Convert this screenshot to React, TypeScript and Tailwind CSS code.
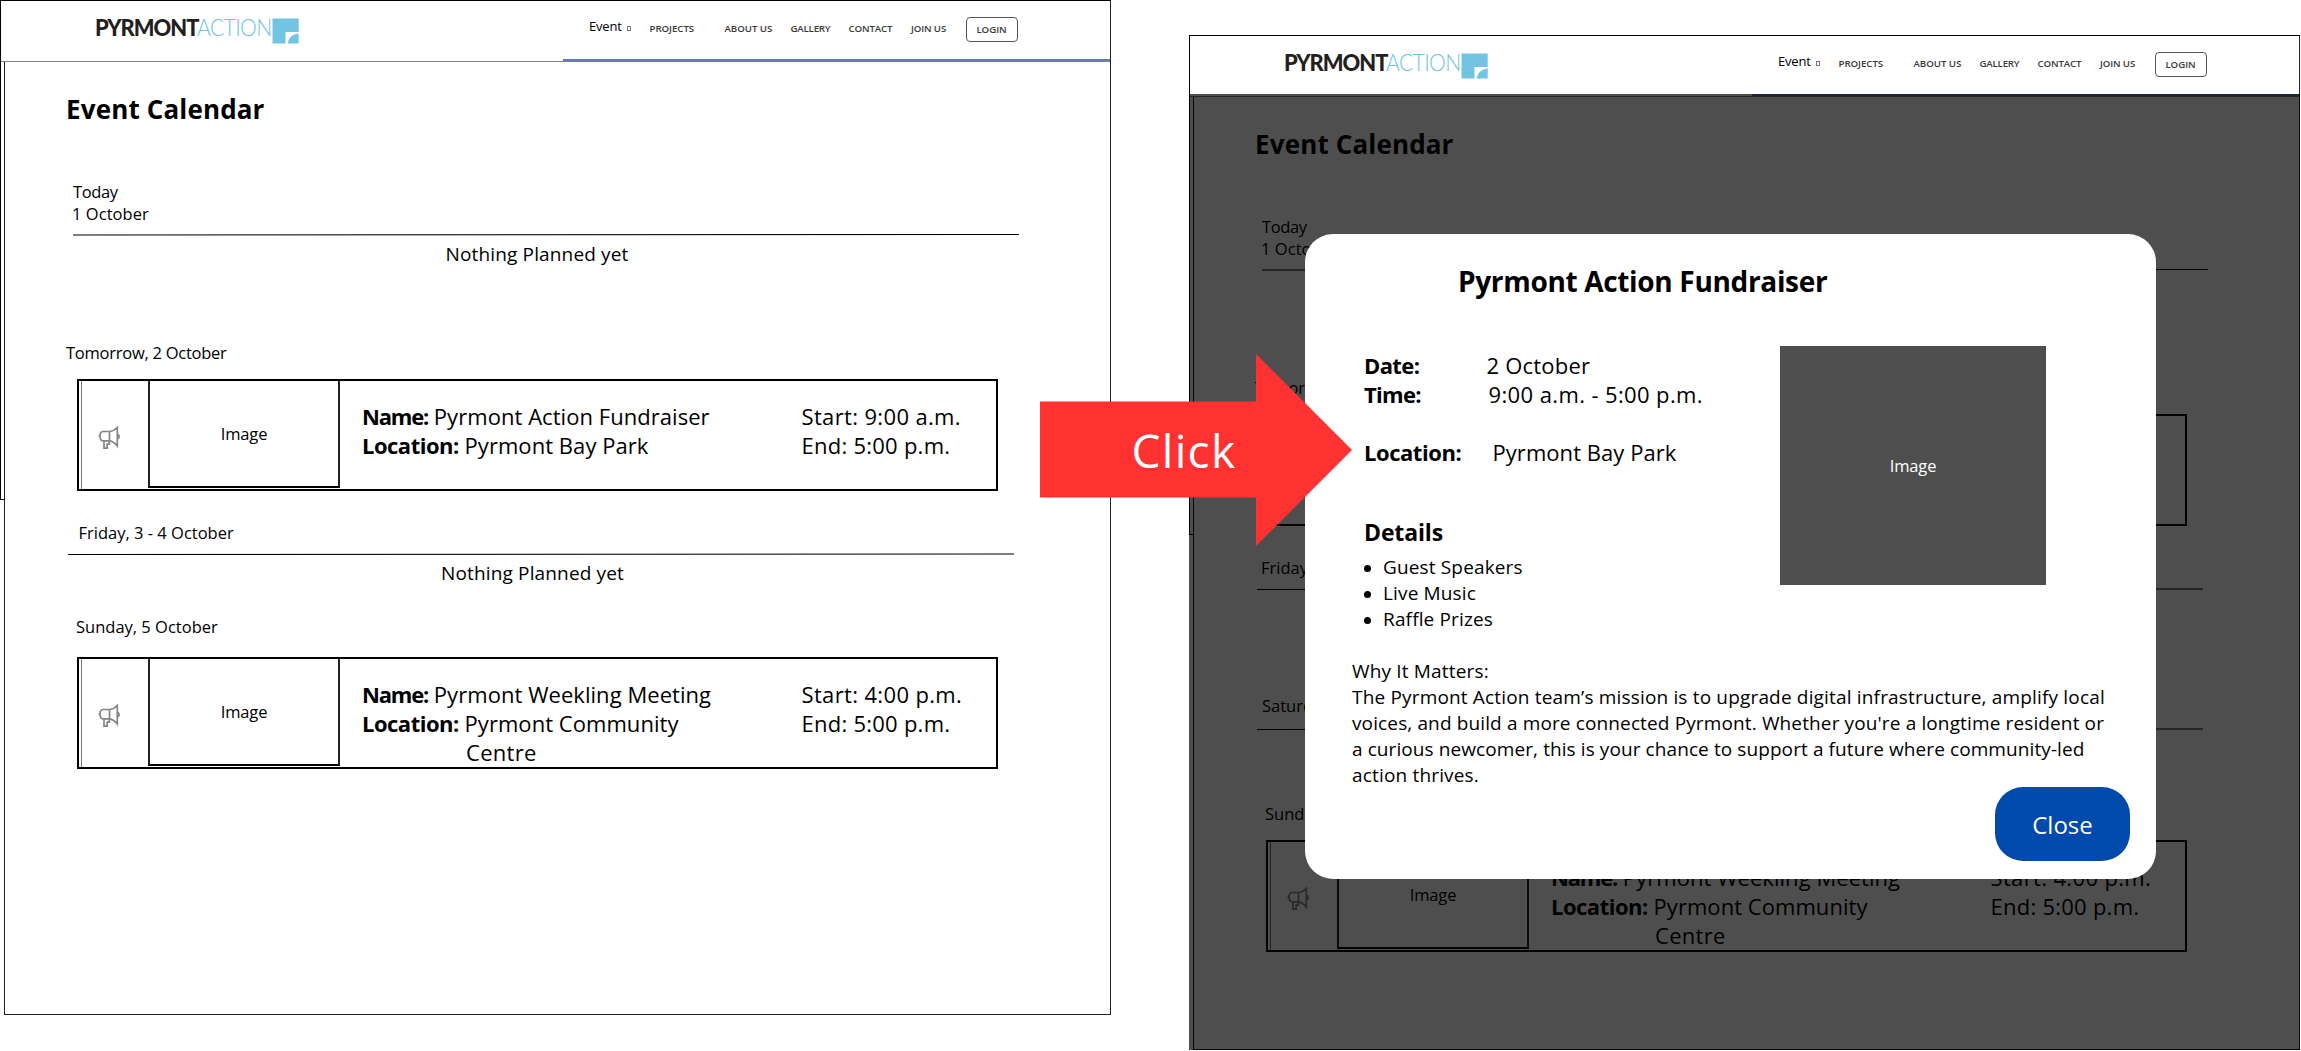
import type { ReactNode } from "react";

type EventInfo = { name: string; location: string; locationRest?: string; start: string; end: string };

const fundraiser: EventInfo = {
  name: "Pyrmont Action Fundraiser",
  location: "Pyrmont Bay Park",
  start: "9:00 a.m.",
  end: "5:00 p.m.",
};

const meeting: EventInfo = {
  name: "Pyrmont Weekling Meeting",
  location: "Pyrmont Community",
  locationRest: "Centre",
  start: "4:00 p.m.",
  end: "5:00 p.m.",
};

function Logo() {
  return (
    <div className="flex items-start">
      <div className="flex w-[177px] items-baseline font-['Lato'] text-[23.5px] leading-[28px]">
        <span className="w-[102px] origin-left scale-x-[0.93] font-black tracking-[-1.1px] text-[#231f20]">PYRMONT</span>
        <span className="origin-left scale-x-[0.9] tracking-[-0.7px] text-[#6ec3e2] font-light">ACTION</span>
      </div>
      <svg className="mt-[5px] h-[26px] w-[27px]" viewBox="0 0 27 26">
        <path d="M0.5 0.5H26.7V25.5H0.5Z" fill="#72c4e2" />
        <path d="M13.5 14H27V26H13.5Z" fill="#fff" />
        <path d="M26.700 15.500V25.400H15.600Q17 16.500 26.700 15.500Z" fill="#72c4e2" />
      </svg>
    </div>
  );
}

function Header() {
  return (
    <header className="relative h-[61px] border-b border-[#7f7f7f] bg-white">
      <div className="flex pl-[95px] pt-[12px]">
        <div className="w-[493px]">
          <Logo />
        </div>
        <nav className="flex pt-[7px] text-[9.7px] font-semibold leading-[18px] tracking-[-0.05px] text-[#3a3a3a]">
          <div className="-mt-[2px] ml-px flex h-[16px] w-[60.500px] items-center text-[13px] font-normal leading-[16px] tracking-[-0.2px] text-black">
            Event
            <span className="ml-[5px] mt-1 h-[5px] w-[4px] border border-[#777]" />
          </div>
          <span className="w-[75px]">PROJECTS</span>
          <span className="w-[66px]">ABOUT US</span>
          <span className="w-[58px] tracking-[-0.2px]">GALLERY</span>
          <span className="w-[62.500px] tracking-[-0.150px]">CONTACT</span>
          <span className="w-[54.500px] tracking-[-0.150px]">JOIN US</span>
          <button className="-mt-[3px] flex h-[25px] w-[52px] items-center justify-center rounded-[4px] border border-[#555]">
            LOGIN
          </button>
        </nav>
      </div>
      <div className="absolute bottom-0 right-0 h-[2px] w-[547px] bg-[#5b7db8]" />
    </header>
  );
}

function Megaphone() {
  return (
    <svg className="h-[23px] w-[23px]" viewBox="0 0 23 23" fill="none" stroke="#858585" strokeWidth="1.7">
      <path d="M11.500 5.500H5C2.600 5.500 2 7.600 2 10s.6 4.800 3 4.800h6.500V5.500" />
      <path d="M11.500 5.500C14.500 5.200 17 3.900 19.300 1.500V20C17 17 14.500 15.200 11.500 14.800" />
      <path d="M20 8.500Q22.300 10.300 20 12.600M0.500 10H2M6 15V22.200H9.200V18.200H11.300V15.200" />
    </svg>
  );
}

function DayLabel({ children, className }: { children: ReactNode; className: string }) {
  return <p className={`text-[16.500px] leading-[22px] ${className}`}>{children}</p>;
}

/* Two-pixel hairline whose weight shifts from one row to the other along its length. */
function Rule({ tilt, className }: { tilt: "up" | "down"; className: string }) {
  return (
    <div className={className}>
      <div
        className={
          tilt === "up"
            ? "h-px bg-linear-to-r from-[#7f7f7f] to-black"
            : "h-px bg-linear-to-r from-transparent to-[#7f7f7f]"
        }
      />
      <div
        className={
          tilt === "up"
            ? "h-px bg-linear-to-r from-[#7f7f7f] to-transparent"
            : "h-px bg-linear-to-r from-black to-[#7f7f7f]"
        }
      />
    </div>
  );
}

function NothingPlanned({ className }: { className: string }) {
  return <p className={`text-[19px] leading-[26px] tracking-[0.150px] ${className}`}>Nothing Planned yet</p>;
}

function EventCard({ event, className }: { event: EventInfo; className: string }) {
  return (
    <article className={`ml-[72px] flex h-[112px] w-[921px] border-2 border-black pl-[2px] ${className}`}>
      <div className="flex w-[67px] items-center border-l border-[#777] pl-[16px] pt-[5px]">
        <Megaphone />
      </div>
      <div className="flex h-[107px] w-[192px] items-center justify-center border-x-2 border-b-2 border-x-[#222] border-b-black text-[16.500px] leading-[22px] tracking-[-0.150px]">
        Image
      </div>
      <div className="w-[461.500px] pl-[22px] pt-[21px] text-[22px] leading-[29px] tracking-[0.050px]">
        <p>
          <b className="tracking-[-1.200px]">Name:</b> {event.name}
        </p>
        <p>
          <b className="tracking-[-0.500px]">Location:</b> {event.location}
        </p>
        {event.locationRest && <p className="pl-[104px] tracking-[0.300px]">{event.locationRest}</p>}
      </div>
      <div className="whitespace-nowrap pt-[21px] text-[22px] leading-[29px] tracking-[0.350px]">
        <p>Start: {event.start}</p>
        <p className="tracking-[0.250px]">End: {event.end}</p>
      </div>
    </article>
  );
}

function CalendarPage({ variant }: { variant: "plain" | "dimmed" }) {
  return (
    <section className="relative h-[1015px] w-[1111px] border-r border-t border-[#222] border-t-black bg-white text-black">
      <Header />
      <div className="ml-1 h-[953px] border-b border-l border-[#222]">
        <h1 className="pl-[61px] pt-[29px] text-[26px] font-bold leading-[36px] tracking-[0.150px]">Event Calendar</h1>
        <DayLabel className="mt-[54px] pl-[68px] tracking-[-0.400px]">Today</DayLabel>
        <DayLabel className="pl-[67px] tracking-[0.050px]">1 October</DayLabel>
        <Rule tilt="up" className="ml-[68px] mt-[9px] w-[946px]" />
        <NothingPlanned className="mt-[5px] pl-[440.500px]" />
        <DayLabel className="mt-[75px] pl-[61px] tracking-[-0.250px]">Tomorrow, 2 October</DayLabel>
        <EventCard event={fundraiser} className="mt-[15px]" />
        {variant === "plain" ? (
          <>
            <DayLabel className="mt-[31px] pl-[73.500px]">Friday, 3 - 4 October</DayLabel>
            <Rule tilt="down" className="ml-[63px] mt-[9px] w-[946px]" />
            <NothingPlanned className="mt-[5px] pl-[436px]" />
            <DayLabel className="mt-[30px] pl-[71px]">Sunday, 5 October</DayLabel>
            <EventCard event={meeting} className="mt-[19px]" />
          </>
        ) : (
          <>
            <DayLabel className="mt-[31px] pl-[67px]">Friday, 3 October</DayLabel>
            <Rule tilt="down" className="ml-[63px] mt-[9px] w-[946px]" />
            <DayLabel className="mt-[105px] pl-[68px]">Saturday, 4 October</DayLabel>
            <Rule tilt="down" className="ml-[63px] mt-[11px] w-[946px]" />
            <DayLabel className="mt-[73px] pl-[71px]">Sunday, 5 October</DayLabel>
            <EventCard event={meeting} className="mt-[15px]" />
          </>
        )}
      </div>
      <div className="absolute -top-px left-0 h-[500px] w-[5px] border-b border-l border-black" />
    </section>
  );
}

function Modal() {
  return (
    <div className="absolute left-[116px] top-[199px] h-[645px] w-[851px] rounded-[28px] bg-white text-black">
      <h2 className="pl-[153px] pt-[28px] text-[28px] font-bold leading-[38px] tracking-[-0.330px]">
        Pyrmont Action Fundraiser
      </h2>
      <div className="flex">
        <div className="w-[475px] pl-[59px] pt-[51px] text-[22px] leading-[29px]">
          <div className="flex">
            <b className="w-[122.500px] tracking-[-0.600px]">Date:</b>
            <span className="tracking-[0.200px]">2 October</span>
          </div>
          <div className="flex">
            <b className="w-[124.500px] tracking-[-0.700px]">Time:</b>
            <span className="tracking-[0.380px]">9:00 a.m. - 5:00 p.m.</span>
          </div>
          <div className="mt-[29px] flex">
            <b className="w-[128.500px] tracking-[-0.450px]">Location:</b>
            <span className="tracking-[0.050px]">Pyrmont Bay Park</span>
          </div>
          <h3 className="mt-[50px] text-[23px] font-bold leading-[31px] tracking-[-0.150px]">Details</h3>
          <ul className="mt-[6px] text-[19px] leading-[26px] tracking-[0.150px]">
            {["Guest Speakers", "Live Music", "Raffle Prizes"].map((item) => (
              <li key={item} className="flex items-center">
                <span className="mr-[12px] mt-[2px] h-[7px] w-[7px] rounded-full bg-black" />
                {item}
              </li>
            ))}
          </ul>
        </div>
        <div className="mt-[46px] flex h-[239px] w-[266px] items-center justify-center bg-[#4e4e4e] pt-px text-[16.500px] leading-[22px] tracking-[-0.150px] text-white">
          Image
        </div>
      </div>
      <div className="mt-[26px] whitespace-nowrap pl-[47px] text-[19px] leading-[26px] tracking-[0.170px]">
        <p>Why It Matters:</p>
        <p>The Pyrmont Action team’s mission is to upgrade digital infrastructure, amplify local</p>
        <p className="tracking-[0.130px]">voices, and build a more connected Pyrmont. Whether you're a longtime resident or</p>
        <p className="tracking-[0.090px]">a curious newcomer, this is your chance to support a future where community-led</p>
        <p>action thrives.</p>
      </div>
      <button className="absolute bottom-[18px] right-[26px] h-[74px] w-[135px] rounded-[28px] bg-[#004aad] pt-[2px] text-[24px] leading-[32px] text-white">
        Close
      </button>
    </div>
  );
}

function ClickArrow() {
  return (
    <div className="absolute left-[1039.500px] top-[354px] flex h-[192px] w-[312px] items-center pb-px pl-[92px]">
      <svg className="absolute inset-0 h-full w-full" viewBox="0 0 312 192">
        <path d="M0 47.500H216V0L312 96L216 192V143.500H0Z" fill="#ff3131" />
      </svg>
      <span className="relative text-[46px] leading-[62px] tracking-[1.300px] text-white">Click</span>
    </div>
  );
}

export default function App() {
  return (
    <main className="relative flex h-[1051px] w-[2301px] overflow-hidden bg-white font-['Open_Sans',sans-serif]">
      <CalendarPage variant="plain" />
      <div className="relative ml-[78px] mt-[35px]">
        <CalendarPage variant="dimmed" />
        <div className="absolute inset-x-0 bottom-[1px] top-[59px] bg-black/[0.694]" />
        <Modal />
      </div>
      <ClickArrow />
    </main>
  );
}
